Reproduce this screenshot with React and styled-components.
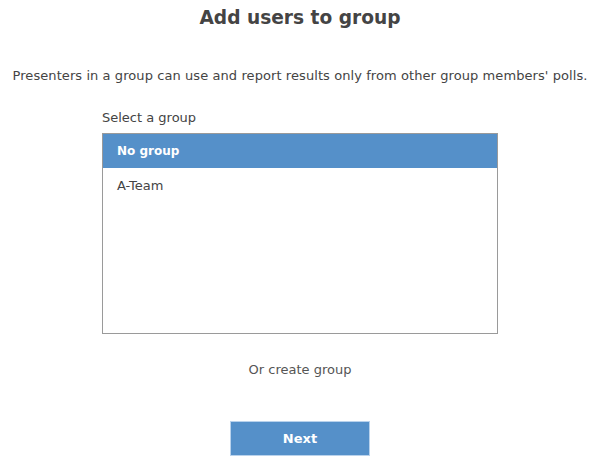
import React, { useState } from "react";
import styled, { createGlobalStyle } from "styled-components";

const GlobalStyle = createGlobalStyle`
  body {
    margin: 0;
    background: #ffffff;
    font-family: "DejaVu Sans", "Liberation Sans", sans-serif;
    color: #333;
  }
`;

const Page = styled.div`
  width: 600px;
  height: 467px;
  display: flex;
  flex-direction: column;
  align-items: center;
  box-sizing: border-box;
  padding-top: 5px;
`;

const Title = styled.h1`
  margin: 0;
  font-size: 18.6px;
  line-height: 26px;
  font-weight: bold;
  color: #444;
`;

const Description = styled.p`
  margin: 36px 0 0;
  font-size: 13px;
  letter-spacing: 0.08px;
  line-height: 18px;
  color: #444;
  white-space: nowrap;
`;

const Form = styled.div`
  width: 396px;
  margin-top: 25px;
  display: flex;
  flex-direction: column;
`;

const Label = styled.div`
  font-size: 13px;
  line-height: 16px;
  color: #444;
  margin-bottom: 7px;
`;

const ListBox = styled.ul`
  list-style: none;
  margin: 0;
  padding: 0;
  height: 201px;
  box-sizing: border-box;
  border: 1px solid #9a9a9a;
  background: #fff;
`;

const Option = styled.li`
  height: 34px;
  display: flex;
  align-items: center;
  padding-left: 14px;
  font-size: ${(p) => (p.$selected ? "12px" : "13px")};
  cursor: pointer;
  background: ${(p) => (p.$selected ? "#5590c9" : "transparent")};
  color: ${(p) => (p.$selected ? "#fff" : "#444")};
  font-weight: ${(p) => (p.$selected ? "bold" : "normal")};
`;

const CreateLink = styled.div`
  margin-top: 27px;
  font-size: 13px;
  line-height: 18px;
  color: #555;
  text-align: center;
`;

const NextButton = styled.button`
  margin-top: 42px;
  width: 140px;
  height: 35px;
  border: 1px solid #b9d2ec;
  background: #5590c9;
  color: #fff;
  font-family: inherit;
  font-size: 13px;
  font-weight: bold;
  cursor: pointer;
`;

const groups = ["No group", "A-Team"];

export default function App() {
  const [selected, setSelected] = useState("No group");

  return (
    <>
      <GlobalStyle />
      <Page>
        <Title>Add users to group</Title>
        <Description>
          Presenters in a group can use and report results only from other group members' polls.
        </Description>
        <Form>
          <Label>Select a group</Label>
          <ListBox>
            {groups.map((g) => (
              <Option key={g} $selected={g === selected} onClick={() => setSelected(g)}>
                {g}
              </Option>
            ))}
          </ListBox>
          <CreateLink>Or create group</CreateLink>
        </Form>
        <NextButton>Next</NextButton>
      </Page>
    </>
  );
}
